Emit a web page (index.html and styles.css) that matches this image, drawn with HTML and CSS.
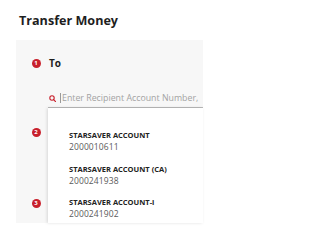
FILE: index.html
```html
<!DOCTYPE html>
<html lang="en">
<head>
<meta charset="utf-8">
<title>Transfer Money</title>
<link rel="stylesheet" href="styles.css">
</head>
<body>
<h1 class="title">Transfer Money</h1>
<section class="card">
  <div class="to-row">
    <span class="badge">1</span>
    <span class="to-label">To</span>
  </div>
  <div class="search-row">
    <svg class="search-icon" viewBox="0 0 7 7" width="7" height="7" aria-hidden="true">
      <circle cx="3" cy="3" r="2.2" fill="none" stroke="#c8202c" stroke-width="1.1"/>
      <line x1="4.6" y1="4.6" x2="6.6" y2="6.6" stroke="#c8202c" stroke-width="1.2" stroke-linecap="round"/>
    </svg>
    <span class="caret"></span>
    <span class="placeholder">Enter Recipient Account Number,</span>
  </div>
  <div class="list">
    <div class="panel"></div>
    <span class="badge badge-a">2</span>
    <div class="item item-1">
      <div class="item-name">STARSAVER ACCOUNT</div>
      <div class="item-no">2000010611</div>
    </div>
    <div class="item item-2">
      <div class="item-name">STARSAVER ACCOUNT (CA)</div>
      <div class="item-no">2000241938</div>
    </div>
    <span class="badge badge-b">3</span>
    <div class="item item-3">
      <div class="item-name">STARSAVER ACCOUNT-i</div>
      <div class="item-no">2000241902</div>
    </div>
  </div>
</section>
</body>
</html>
```
FILE: styles.css
```css
* { box-sizing: border-box; }
html, body { margin: 0; padding: 0; background: #ffffff; }
body {
  width: 216px;
  height: 233px;
  overflow: hidden;
  font-family: "Open Sans", "Liberation Sans", sans-serif;
  color: #222;
}
.title {
  margin: 0;
  padding: 11px 0 0 19px;
  font-size: 12.6px;
  line-height: 19px;
  font-weight: 700;
  color: #1e1e1e;
}
.card {
  margin: 10px 13px 0 16px;
  background: #f7f7f7;
  padding-top: 16px;
}
.to-row {
  display: flex;
  align-items: center;
  gap: 8.5px;
  padding-left: 15.5px;
  height: 14px;
}
.badge {
  width: 9px;
  height: 9px;
  border-radius: 50%;
  background: #c8202c;
  color: #fff;
  font-size: 6px;
  line-height: 9px;
  font-weight: 700;
  text-align: center;
  flex: none;
}
.to-label {
  font-size: 10px;
  line-height: 14px;
  font-weight: 700;
  color: #1e1e1e;
}
.search-row {
  margin: 21px 0 0 32px;
  display: flex;
  align-items: center;
  height: 17px;
  padding-bottom: 2px;
  border-bottom: 1px solid #b9b9b9;
  overflow: hidden;
  white-space: nowrap;
}
.search-icon { flex: none; margin-left: 1px; }
.caret {
  flex: none;
  width: 1px;
  height: 10px;
  background: #9a9a9a;
  margin-left: 4px;
}
.placeholder {
  margin-left: 1px;
  font-size: 8.8px;
  line-height: 14px;
  color: #a3a3a3;
}
.list {
  display: grid;
  grid-template-columns: 32px 1fr;
  grid-template-rows: 10.5px auto auto auto 4px;
}
.panel {
  grid-column: 2;
  grid-row: 1 / -1;
  background: #fff;
  box-shadow: -1px 0 3px rgba(0, 0, 0, 0.13);
}
.item {
  grid-column: 2;
  padding: 11.5px 0 0 21px;
}
.item-1 { grid-row: 2; }
.item-2 { grid-row: 3; }
.item-3 { grid-row: 4; }
.badge-a, .badge-b {
  grid-column: 1;
  align-self: start;
  margin-left: 15.5px;
}
.badge-a { grid-row: 2; margin-top: 9px; }
.badge-b { grid-row: 4; margin-top: 13px; }
.item-name {
  font-size: 7.5px;
  line-height: 11px;
  font-weight: 700;
  color: #222;
  white-space: nowrap;
}
.item-no {
  font-size: 8.5px;
  line-height: 11px;
  letter-spacing: 0.1px;
  color: #5a5a5a;
}
```
